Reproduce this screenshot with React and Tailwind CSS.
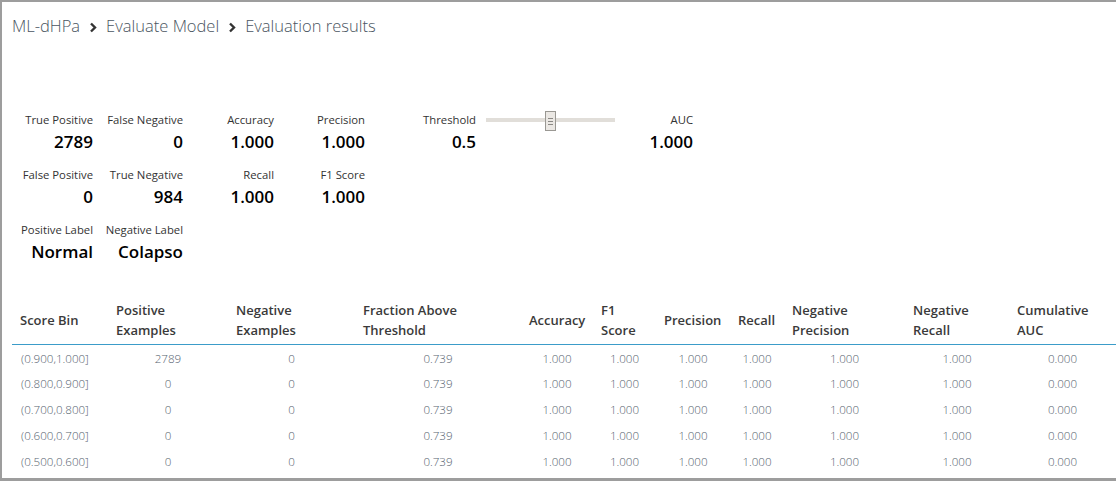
import React from 'react'

const font = { fontFamily: '"Open Sans", "Noto Sans", sans-serif' }

const headers = [
  ['Score Bin'],
  ['Positive', 'Examples'],
  ['Negative', 'Examples'],
  ['Fraction Above', 'Threshold'],
  ['Accuracy'],
  ['F1', 'Score'],
  ['Precision'],
  ['Recall'],
  ['Negative', 'Precision'],
  ['Negative', 'Recall'],
  ['Cumulative', 'AUC'],
]

const colWidths = [96, 120, 127, 166, 72, 63, 74, 54, 121, 104, 107]

const rows = [
  ['(0.900,1.000]', '2789'],
  ['(0.800,0.900]', '0'],
  ['(0.700,0.800]', '0'],
  ['(0.600,0.700]', '0'],
  ['(0.500,0.600]', '0'],
]

function Chevron() {
  return (
    <svg width="8" height="11" viewBox="0 0 8 11" className="mx-[9px] mt-[2px]">
      <polyline points="2,1.5 6,5.5 2,9.5" fill="none" stroke="#333" strokeWidth="2.4" />
    </svg>
  )
}

function Metric({ label, value }) {
  return (
    <div className="flex flex-col items-end">
      <div className="text-[11.3px] leading-[16px] text-[#333]">{label}</div>
      <div className="mt-[2px] text-[17px] leading-[24px] font-semibold text-black">{value}</div>
    </div>
  )
}

export default function App() {
  return (
    <div className="w-[1116px] h-[481px] bg-[#9d9d9d] pl-[2px] pt-[2px] pb-[3px] overflow-hidden" style={font}>
      <div className="h-full bg-white">
        {/* breadcrumb */}
        <div className="flex items-center pl-[10px] pt-[11px] h-[37px] text-[16.5px] leading-[24px] font-light text-[#4a5561]">
          <span>ML-dHPa</span>
          <Chevron />
          <span>Evaluate Model</span>
          <Chevron />
          <span>Evaluation results</span>
        </div>

        {/* metrics */}
        <div className="flex mt-[73px] h-[152px]">
          <div className="grid grid-cols-[90px_90px_91px_91px] grid-rows-[55px_55px_42px] pl-[1px]">
            <Metric label="True Positive" value="2789" />
            <Metric label="False Negative" value="0" />
            <Metric label="Accuracy" value="1.000" />
            <Metric label="Precision" value="1.000" />
            <Metric label="False Positive" value="0" />
            <Metric label="True Negative" value="984" />
            <Metric label="Recall" value="1.000" />
            <Metric label="F1 Score" value="1.000" />
            <Metric label="Positive Label" value="Normal" />
            <Metric label="Negative Label" value="Colapso" />
          </div>
          <div className="w-[111px]">
            <Metric label="Threshold" value="0.5" />
          </div>
          <div className="relative ml-[10px] w-[129px] h-[20px] mt-[-1px]">
            <div className="absolute left-0 right-0 top-[7px] h-[4px] bg-[#e1ded9]" />
            <div className="absolute left-[59px] top-0 w-[11px] h-[20px] bg-[#ebe8e4] border border-[#9a9893] flex flex-col items-center justify-center gap-[2px]">
              <div className="w-[5px] h-px bg-[#8a8884]" />
              <div className="w-[5px] h-px bg-[#8a8884]" />
              <div className="w-[5px] h-px bg-[#8a8884]" />
            </div>
          </div>
          <div className="w-[78px]">
            <Metric label="AUC" value="1.000" />
          </div>
        </div>

        {/* table */}
        <table className="ml-[10px] mt-[34px] table-fixed border-collapse w-[1104px]">
          <colgroup>
            {colWidths.map((w, i) => (
              <col key={i} style={{ width: w }} />
            ))}
          </colgroup>
          <thead>
            <tr className="border-b border-[#3b9cc9]">
              {headers.map((h, i) => (
                <th key={i} className="text-left align-middle pl-[8px] pt-[2px] pb-[4px] h-[46px] text-[13px] leading-[20px] font-semibold text-[#3a3a3a]">
                  {h.map((line, j) => (
                    <div key={j}>{line}</div>
                  ))}
                </th>
              ))}
            </tr>
          </thead>
          <tbody>
            {rows.map(([bin, pos], i) => (
              <tr key={i} className="h-[26px] text-[11.6px] font-light text-[#56636f]">
                <td className="pl-[9px] pt-[1px]">{bin}</td>
                <td className="text-center pt-[1px]">{pos}</td>
                <td className="text-center pt-[1px]">0</td>
                <td className="text-center pt-[1px]">0.739</td>
                <td className="text-center pt-[1px]">1.000</td>
                <td className="text-center pt-[1px]">1.000</td>
                <td className="text-center pt-[1px]">1.000</td>
                <td className="text-center pt-[1px]">1.000</td>
                <td className="text-center pt-[1px]">1.000</td>
                <td className="text-center pt-[1px]">1.000</td>
                <td className="text-center pt-[1px]">0.000</td>
              </tr>
            ))}
          </tbody>
        </table>
      </div>
    </div>
  )
}
